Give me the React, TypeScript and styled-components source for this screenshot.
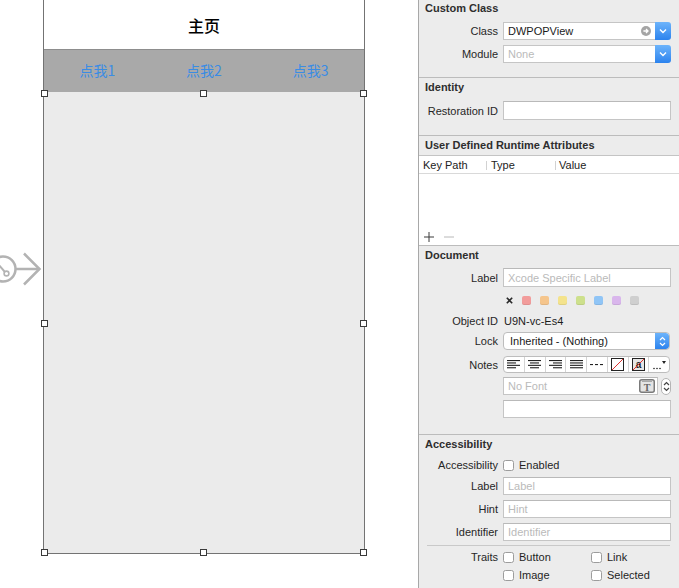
import React from "react";
import styled, { createGlobalStyle } from "styled-components";

const GlobalStyle = createGlobalStyle`
  html, body { margin: 0; padding: 0; background: #fff; }
  body {
    font-family: "Liberation Sans", Arial, sans-serif;
    font-size: 11px;
    color: #222;
    overflow: hidden;
  }
  * { box-sizing: border-box; }
`;

const Page = styled.div`
  display: flex;
  width: 679px;
  height: 588px;
  overflow: hidden;
`;

/* ---------- canvas ---------- */

const Canvas = styled.div`
  position: relative;
  flex: 0 0 418px;
  height: 588px;
  padding-left: 43px;
  background: #fff;
`;

const Frame = styled.div`
  width: 322px;
  display: flex;
  flex-direction: column;
  border: 1px solid #737373;
  border-top: none;
`;

const NavBar = styled.div`
  height: 49px;
  padding-top: 1px;
  background: #fff;
  display: flex;
  align-items: center;
  justify-content: center;
  font-family: "Noto Sans CJK SC", sans-serif;
  font-size: 16px;
  font-weight: 500;
  color: #000;
`;

const TabBar = styled.div`
  height: 43px;
  background: #a9a9a9;
  border-top: 1px solid #8d8d8d;
  display: grid;
  grid-template-columns: repeat(3, 1fr);
  align-items: center;
  padding-bottom: 3px;
`;

const TabItem = styled.div`
  text-align: center;
  font-family: "Noto Sans CJK SC", sans-serif;
  font-size: 14px;
  color: #3a8ce4;
`;

const Body = styled.div`
  position: relative;
  height: 461px;
  background: #ebebeb;
`;

const Handle = styled.span<{ $x: number; $y: number }>`
  position: absolute;
  left: ${(p) => p.$x}px;
  top: ${(p) => p.$y}px;
  width: 7px;
  height: 7px;
  background: #fff;
  border: 1px solid #3a3a3a;
`;

const EntryArrow = styled.svg`
  position: absolute;
  left: 0;
  top: 252px;
`;

/* ---------- inspector ---------- */

const Inspector = styled.aside`
  flex: 0 0 261px;
  height: 588px;
  background: #ececec;
  border-left: 1px solid #a8a8a8;
  display: flex;
  flex-direction: column;
  overflow: hidden;
`;

const Section = styled.section<{ $pb: number; $last?: boolean }>`
  flex: none;
  padding-bottom: ${(p) => p.$pb}px;
  border-bottom: ${(p) => (p.$last ? "none" : "1px solid #bcbcbc")};
`;

const SectionTitle = styled.h3<{ $pt?: number; $pb?: number }>`
  margin: 0;
  padding: ${(p) => p.$pt ?? 2}px 0 ${(p) => p.$pb ?? 0}px 6px;
  font: bold 11px/14px "Liberation Sans", Arial, sans-serif;
  color: #2e2e2e;
`;

const Row = styled.div<{ $mt: number }>`
  display: grid;
  grid-template-columns: 79px 1fr;
  column-gap: 5px;
  align-items: center;
  padding-right: 8px;
  margin-top: ${(p) => p.$mt}px;
`;

const Label = styled.span`
  text-align: right;
  font-size: 11px;
  line-height: 14px;
  color: #262626;
  white-space: nowrap;
`;

const Value = styled.span`
  font-size: 11px;
  line-height: 14px;
  color: #1c1c1c;
  padding-left: 1px;
`;

const TextField = styled.div<{ $h?: number; $ph?: boolean }>`
  height: ${(p) => p.$h ?? 18}px;
  background: #fff;
  border: 1px solid #c5c5c5;
  border-top-color: #b9b9b9;
  padding: 0 4px;
  display: flex;
  align-items: center;
  font-size: 11px;
  color: ${(p) => (p.$ph ? "#bababa" : "#1a1a1a")};
  white-space: nowrap;
  overflow: hidden;
`;

const Combo = styled.div`
  height: 18px;
  display: flex;
`;

const ComboInput = styled.div<{ $ph?: boolean }>`
  flex: 1;
  display: flex;
  align-items: center;
  justify-content: space-between;
  background: #fff;
  border: 1px solid #c5c5c5;
  border-right: none;
  padding: 0 4px;
  font-size: 11px;
  color: ${(p) => (p.$ph ? "#bababa" : "#1a1a1a")};
`;

const BlueButton = styled.div<{ $w?: number }>`
  flex: 0 0 ${(p) => p.$w ?? 16}px;
  display: flex;
  align-items: center;
  justify-content: center;
  border-radius: 0 3px 3px 0;
  background: linear-gradient(#6db4fb, #2c83ee);
`;

const Popup = styled.div`
  height: 18px;
  margin-right: 1px;
  display: flex;
  background: #fff;
  border: 1px solid #bdbdbd;
  border-radius: 4px;
  overflow: hidden;
`;

const PopupText = styled.div`
  flex: 1;
  display: flex;
  align-items: center;
  padding-left: 6px;
  font-size: 11px;
  color: #1a1a1a;
`;

const Swatches = styled.div`
  display: flex;
  align-items: center;
  gap: 9px;
  height: 9px;
  padding-left: 3px;
`;

const Swatch = styled.span<{ $c: string }>`
  width: 9px;
  height: 9px;
  border-radius: 2px;
  background: ${(p) => p.$c};
  box-shadow: inset 0 -1px 0 rgba(0, 0, 0, 0.08);
`;

const Segmented = styled.div`
  height: 17px;
  margin-right: 1px;
  display: flex;
  background: #fff;
  border: 1px solid #bdbdbd;
  border-radius: 4px;
  overflow: hidden;
`;

const Segment = styled.div`
  flex: 1;
  display: flex;
  align-items: center;
  justify-content: center;
  & + & { border-left: 1px solid #d4d4d4; }
`;

const FontRow = styled.div`
  display: flex;
  gap: 3px;
  align-items: center;
`;

const FontField = styled(TextField)`
  flex: 1;
  justify-content: space-between;
  padding-right: 2px;
`;

const Stepper = styled.div`
  flex: 0 0 10px;
  height: 17px;
  display: flex;
  align-items: center;
  justify-content: center;
  background: #fff;
  border: 1px solid #b5b5b5;
  border-radius: 5px;
`;

const Table = styled.div`
  background: #fff;
  border-top: 1px solid #c4c4c4;
`;

const TableHead = styled.div`
  height: 18px;
  display: grid;
  grid-template-columns: 67px 69px 1fr;
  align-items: center;
  border-bottom: 1px solid #d9d9d9;
`;

const HeadCell = styled.div<{ $pl: number; $sep?: boolean }>`
  position: relative;
  padding-left: ${(p) => p.$pl}px;
  font-size: 11px;
  line-height: 14px;
  color: #222;
  &::before {
    content: "";
    display: ${(p) => (p.$sep ? "block" : "none")};
    position: absolute;
    left: 0;
    top: 3px;
    width: 1px;
    height: 9px;
    background: #d2d2d2;
  }
`;

const TableBody = styled.div`
  height: 71px;
  display: flex;
  align-items: flex-end;
  gap: 10px;
  padding: 0 0 3px 5px;
`;

const CheckItem = styled.label`
  display: flex;
  align-items: center;
  gap: 5px;
  height: 14px;
  font-size: 11px;
  line-height: 14px;
  color: #1f1f1f;
`;

const Box = styled.span`
  width: 11px;
  height: 11px;
  background: #fff;
  border: 1px solid #9c9c9c;
  border-radius: 2.5px;
`;

const TraitGrid = styled.div`
  display: grid;
  grid-template-columns: 88px auto;
`;

const Divider = styled.div`
  height: 1px;
  margin: 4px 9px 0 8px;
  background: #c9c9c9;
`;

/* ---------- icons ---------- */

const Chevron = () => (
  <svg width="8" height="6" viewBox="0 0 8 6">
    <path d="M1 1.5l3 3 3-3" stroke="#fff" strokeWidth="1.4" fill="none" />
  </svg>
);

const UpDown = ({ color = "#fff" }: { color?: string }) => (
  <svg width="7" height="11" viewBox="0 0 7 11">
    <path d="M1 4l2.5-2.5L6 4M1 7l2.5 2.5L6 7" stroke={color} strokeWidth="1.2" fill="none" />
  </svg>
);

const GoArrow = () => (
  <svg width="10" height="10" viewBox="0 0 10 10">
    <circle cx="5" cy="5" r="5" fill="#a5a5a5" />
    <path d="M2.4 5h4.6M5 3l2 2-2 2" stroke="#fff" strokeWidth="1.3" fill="none" />
  </svg>
);

const Align = ({ kind }: { kind: "left" | "center" | "right" | "justify" }) => {
  const widths = kind === "justify" ? [13, 13, 13, 13] : [13, 9, 13, 9];
  return (
    <svg width="13" height="9" viewBox="0 0 13 9">
      {widths.map((w, i) => {
        const x = kind === "left" || kind === "justify" ? 0 : kind === "center" ? (13 - w) / 2 : 13 - w;
        return <rect key={i} x={x} y={i * 2.4} width={w} height="1.1" fill="#222" />;
      })}
    </svg>
  );
};

const Dashes = () => (
  <svg width="13" height="3" viewBox="0 0 13 3">
    <rect x="0" y="1" width="3" height="1.1" fill="#222" />
    <rect x="5" y="1" width="3" height="1.1" fill="#222" />
    <rect x="10" y="1" width="3" height="1.1" fill="#222" />
  </svg>
);

const NoColor = () => (
  <svg width="13" height="13" viewBox="0 0 13 13">
    <rect x="0.5" y="0.5" width="12" height="12" fill="#fff" stroke="#222" />
    <path d="M1 12L12 1" stroke="#e0312f" strokeWidth="1" />
  </svg>
);

const NoBg = () => (
  <svg width="13" height="13" viewBox="0 0 13 13">
    <rect x="0.5" y="0.5" width="12" height="12" fill="#e6e6e6" stroke="#222" />
    <text x="6.5" y="10" textAnchor="middle" fontSize="10" fontWeight="bold" fontFamily="Liberation Sans, Arial, sans-serif" fill="#222">a</text>
    <path d="M1 12L12 1" stroke="#e0312f" strokeWidth="1" />
  </svg>
);

const More = () => (
  <svg width="14" height="10" viewBox="0 0 14 10">
    <circle cx="2" cy="8.5" r="0.8" fill="#222" />
    <circle cx="5" cy="8.5" r="0.8" fill="#222" />
    <circle cx="8" cy="8.5" r="0.8" fill="#222" />
    <path d="M10 1h4l-2 3z" fill="#222" />
  </svg>
);

const FontIcon = () => (
  <svg width="16" height="14" viewBox="0 0 16 14">
    <rect x="0.75" y="0.75" width="14.5" height="12.5" rx="2" fill="#e4e4e4" stroke="#7a7a7a" strokeWidth="1.5" />
    <rect x="3" y="2.2" width="10" height="0.8" fill="#9a9a9a" />
    <text x="8" y="11.6" textAnchor="middle" fontSize="10" fontWeight="bold" fontFamily="Liberation Serif, serif" fill="#666">T</text>
  </svg>
);

const Cross = () => (
  <svg width="7" height="7" viewBox="0 0 7 7">
    <path d="M0.8 0.8l5.4 5.4M6.2 0.8L0.8 6.2" stroke="#2a2a2a" strokeWidth="1.6" />
  </svg>
);

const Plus = () => (
  <svg width="10" height="10" viewBox="0 0 10 10">
    <path d="M5 0v10M0 5h10" stroke="#3a3a3a" strokeWidth="1" />
  </svg>
);

const Minus = () => (
  <svg width="10" height="10" viewBox="0 0 10 10">
    <path d="M0 5h10" stroke="#b8b8b8" strokeWidth="1" />
  </svg>
);

const swatches = ["#f29c9b", "#f5c58c", "#f4e38c", "#cde08c", "#90c5f6", "#d9b6ec", "#cfcfcf"];

const handles = [
  [-3, -2], [156, -2], [316, -2],
  [-3, 228], [316, 228],
  [-3, 457], [156, 457], [316, 457],
];

export default function App() {
  return (
    <>
      <GlobalStyle />
      <Page>
        <Canvas>
          <EntryArrow width="42" height="36" viewBox="0 0 42 36">
            <circle cx="3" cy="17" r="12.5" fill="none" stroke="#b3b3b3" strokeWidth="2.5" />
            <path d="M-2 12l6.5 7.5" stroke="#b3b3b3" strokeWidth="2" />
            <circle cx="6.5" cy="21.5" r="2.4" fill="#fff" stroke="#b3b3b3" strokeWidth="1.6" />
            <path d="M15.5 17H39.5" stroke="#b3b3b3" strokeWidth="2.5" />
            <path d="M24 1.5L39.5 17L24 32.5" fill="none" stroke="#b3b3b3" strokeWidth="2.5" />
          </EntryArrow>
          <Frame>
            <NavBar>主页</NavBar>
            <TabBar>
              <TabItem>点我1</TabItem>
              <TabItem>点我2</TabItem>
              <TabItem>点我3</TabItem>
            </TabBar>
            <Body>
              {handles.map(([x, y], i) => (
                <Handle key={i} $x={x} $y={y} />
              ))}
            </Body>
          </Frame>
        </Canvas>

        <Inspector>
          <Section $pb={14}>
            <SectionTitle $pt={1}>Custom Class</SectionTitle>
            <Row $mt={7}>
              <Label>Class</Label>
              <Combo>
                <ComboInput>
                  DWPOPView
                  <GoArrow />
                </ComboInput>
                <BlueButton>
                  <Chevron />
                </BlueButton>
              </Combo>
            </Row>
            <Row $mt={5}>
              <Label>Module</Label>
              <Combo>
                <ComboInput $ph>None</ComboInput>
                <BlueButton>
                  <Chevron />
                </BlueButton>
              </Combo>
            </Row>
          </Section>

          <Section $pb={15}>
            <SectionTitle>Identity</SectionTitle>
            <Row $mt={7}>
              <Label>Restoration ID</Label>
              <TextField $h={19} />
            </Row>
          </Section>

          <Section $pb={0}>
            <SectionTitle $pb={3}>User Defined Runtime Attributes</SectionTitle>
            <Table>
              <TableHead>
                <HeadCell $pl={4}>Key Path</HeadCell>
                <HeadCell $pl={5} $sep>Type</HeadCell>
                <HeadCell $pl={4} $sep>Value</HeadCell>
              </TableHead>
              <TableBody>
                <Plus />
                <Minus />
              </TableBody>
            </Table>
          </Section>

          <Section $pb={16}>
            <SectionTitle>Document</SectionTitle>
            <Row $mt={6}>
              <Label>Label</Label>
              <TextField $h={19} $ph>Xcode Specific Label</TextField>
            </Row>
            <Row $mt={9}>
              <span />
              <Swatches>
                <Cross />
                {swatches.map((c) => (
                  <Swatch key={c} $c={c} />
                ))}
              </Swatches>
            </Row>
            <Row $mt={9}>
              <Label>Object ID</Label>
              <Value>U9N-vc-Es4</Value>
            </Row>
            <Row $mt={4}>
              <Label>Lock</Label>
              <Popup>
                <PopupText>Inherited - (Nothing)</PopupText>
                <BlueButton $w={14}>
                  <UpDown />
                </BlueButton>
              </Popup>
            </Row>
            <Row $mt={6}>
              <Label>Notes</Label>
              <Segmented>
                <Segment><Align kind="left" /></Segment>
                <Segment><Align kind="center" /></Segment>
                <Segment><Align kind="right" /></Segment>
                <Segment><Align kind="justify" /></Segment>
                <Segment><Dashes /></Segment>
                <Segment><NoColor /></Segment>
                <Segment><NoBg /></Segment>
                <Segment><More /></Segment>
              </Segmented>
            </Row>
            <Row $mt={4}>
              <span />
              <FontRow>
                <FontField $ph>
                  No Font
                  <FontIcon />
                </FontField>
                <Stepper>
                  <UpDown color="#444" />
                </Stepper>
              </FontRow>
            </Row>
            <Row $mt={5}>
              <span />
              <TextField />
            </Row>
          </Section>

          <Section $pb={0} $last>
            <SectionTitle>Accessibility</SectionTitle>
            <Row $mt={7}>
              <Label>Accessibility</Label>
              <CheckItem><Box />Enabled</CheckItem>
            </Row>
            <Row $mt={5}>
              <Label>Label</Label>
              <TextField $ph>Label</TextField>
            </Row>
            <Row $mt={5}>
              <Label>Hint</Label>
              <TextField $ph>Hint</TextField>
            </Row>
            <Row $mt={5}>
              <Label>Identifier</Label>
              <TextField $ph>Identifier</TextField>
            </Row>
            <Divider />
            <Row $mt={4}>
              <Label>Traits</Label>
              <TraitGrid>
                <CheckItem><Box />Button</CheckItem>
                <CheckItem><Box />Link</CheckItem>
              </TraitGrid>
            </Row>
            <Row $mt={4}>
              <span />
              <TraitGrid>
                <CheckItem><Box />Image</CheckItem>
                <CheckItem><Box />Selected</CheckItem>
              </TraitGrid>
            </Row>
            <Row $mt={4}>
              <span />
              <TraitGrid>
                <CheckItem><Box /></CheckItem>
              </TraitGrid>
            </Row>
          </Section>
        </Inspector>
      </Page>
    </>
  );
}
